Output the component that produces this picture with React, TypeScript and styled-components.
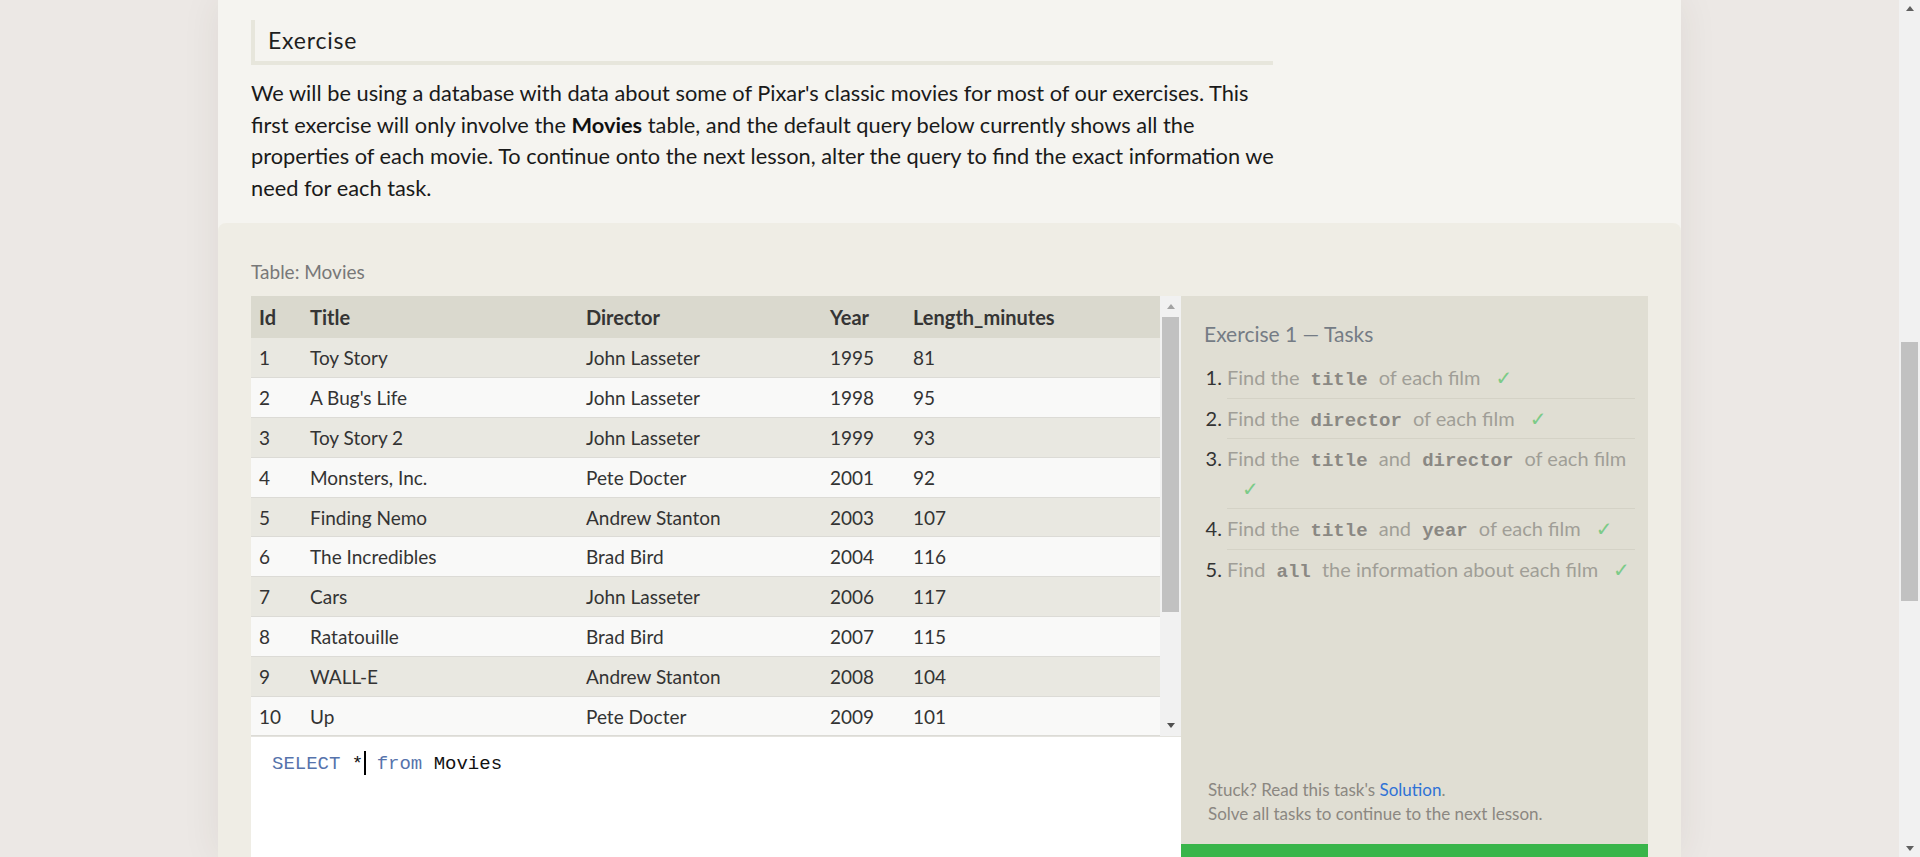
import React from "react";
import styled, { createGlobalStyle } from "styled-components";

const GlobalStyle = createGlobalStyle`
  html, body {
    margin: 0;
    padding: 0;
    height: 857px;
    overflow: hidden;
    background: #ece8e5;
  }
  body {
    font-family: Lato, "Open Sans", sans-serif;
    color: #222;
  }
  * { box-sizing: border-box; }
`;

const Page = styled.div`
  display: flex;
  height: 857px;
  overflow: hidden;
`;

const Main = styled.div`
  flex: 1;
  display: flex;
  justify-content: center;
  overflow: hidden;
`;

const Panel = styled.div`
  width: 1463px;
  flex-shrink: 0;
  background: #f5f4f0;
  box-shadow: 0 0 36px rgba(70, 50, 40, 0.08);
  display: flex;
  flex-direction: column;
`;

const Intro = styled.section`
  padding: 20px 408px 20px 33px;
`;

const Heading = styled.h2`
  margin: 0;
  font-size: 23px;
  font-weight: 400;
  letter-spacing: 0.8px;
  line-height: 41px;
  padding-left: 13px;
  border-left: 4px solid #e7e6dc;
  border-bottom: 4px solid #e7e6dc;
  color: #1e1e1e;
`;

const Paragraph = styled.p`
  margin: 12px -8px 0 0;
  font-size: 21.8px;
  line-height: 31.5px;
  color: #1a1a1a;
`;

const Strong = styled.b`
  font-weight: 700;
  color: #111;
`;

const Workspace = styled.section`
  flex: 1;
  background: #efede5;
  border-radius: 8px 8px 0 0;
  padding: 0 33px;
`;

const TableLabel = styled.div`
  font-size: 19px;
  color: #787878;
  line-height: 26px;
  padding: 36px 0 11px;
`;

const WorkRow = styled.div`
  display: flex;
  align-items: flex-start;
`;

const LeftCol = styled.div`
  width: 930px;
  display: flex;
  flex-direction: column;
`;

const TableArea = styled.div`
  display: flex;
`;

const Table = styled.table`
  flex: 1;
  border-collapse: collapse;
  table-layout: fixed;
  font-size: 19px;
  color: #333;
`;

const HeadCell = styled.th<{ $w?: number }>`
  width: ${(p) => (p.$w ? `${p.$w}px` : "auto")};
  height: 42px;
  padding: 0 8px;
  text-align: left;
  font-size: 20px;
  font-weight: 700;
  background: #dad9ce;
  color: #353535;
`;

const Row = styled.tr<{ $odd: boolean }>`
  background: ${(p) => (p.$odd ? "#e9e8e1" : "#f9f9f8")};
  border-bottom: 1px solid #dcdbd6;
`;

const Cell = styled.td`
  height: 39.8px;
  padding: 0 8px;
  white-space: nowrap;
`;

const ScrollTrack = styled.div<{ $w: number }>`
  width: ${(p) => p.$w}px;
  flex-shrink: 0;
  background: #f1f1f1;
  display: flex;
  flex-direction: column;
`;

const ArrowBox = styled.div<{ $h: number }>`
  height: ${(p) => p.$h}px;
  display: flex;
  align-items: center;
  justify-content: center;
  flex-shrink: 0;
`;

const Arrow = styled.div<{ $up: boolean; $color: string }>`
  width: 0;
  height: 0;
  border-left: 4.5px solid transparent;
  border-right: 4.5px solid transparent;
  ${(p) =>
    p.$up
      ? `border-bottom: 5px solid ${p.$color};`
      : `border-top: 5px solid ${p.$color};`}
`;

const Thumb = styled.div<{ $h: number; $top: number }>`
  height: ${(p) => p.$h}px;
  margin: ${(p) => p.$top}px 2px 0;
  background: #c1c1c1;
  flex-shrink: 0;
`;

const Spacer = styled.div`
  flex: 1;
`;

const Editor = styled.div`
  height: 160px;
  background: #fff;
  border-top: 1px solid #e4e3de;
  padding: 14px 21px;
  font-family: "Liberation Mono", "DejaVu Sans Mono", monospace;
  font-size: 19px;
  line-height: 26px;
  color: #111;
  white-space: pre;
`;

const Keyword = styled.span`
  color: #5673ac;
`;

const Caret = styled.span`
  display: inline-block;
  width: 2px;
  height: 24px;
  background: #000;
  vertical-align: -6px;
  margin: 0 -1px 0 1px;
`;

const RightCol = styled.div`
  width: 467px;
  display: flex;
  flex-direction: column;
`;

const TaskPanel = styled.div`
  height: 548px;
  background: #e0ded3;
  display: flex;
  flex-direction: column;
  padding: 24px 13px 18px 23px;
`;

const TaskTitle = styled.div`
  font-size: 21px;
  line-height: 28px;
  color: #757c85;
`;

const TaskList = styled.ol`
  margin: 10px 0 0;
  padding-left: 23px;
  font-size: 20px;
  color: #a09e97;
`;

const TaskItem = styled.li`
  padding: 5px 0;
  line-height: 29.5px;
  border-bottom: 1px solid #d4d2c6;
  &:last-child { border-bottom: none; }
  &::marker { color: #333; }
`;

const Code = styled.code`
  font-family: "Liberation Mono", "DejaVu Sans Mono", monospace;
  font-weight: 700;
  font-size: 19px;
  line-height: 1;
  color: #8a8883;
  padding: 0 6px;
`;

const Check = styled.span`
  display: inline-block;
  margin-left: 15px;
  color: #7ccb88;
  font-family: "DejaVu Sans", sans-serif;
  font-size: 20px;
  line-height: 1;
`;

const Footer = styled.div`
  margin-top: auto;
  padding-left: 4px;
  font-size: 17px;
  line-height: 24px;
  color: #8b8781;
`;

const Link = styled.a`
  color: #2f72d6;
  text-decoration: none;
`;

const GreenBar = styled.div`
  height: 52px;
  background: #39b54a;
`;

const PageScroll = styled.div`
  width: 21px;
  height: 857px;
  background: #f1f1f1;
  display: flex;
  flex-direction: column;
`;

const movies = [
  [1, "Toy Story", "John Lasseter", 1995, 81],
  [2, "A Bug's Life", "John Lasseter", 1998, 95],
  [3, "Toy Story 2", "John Lasseter", 1999, 93],
  [4, "Monsters, Inc.", "Pete Docter", 2001, 92],
  [5, "Finding Nemo", "Andrew Stanton", 2003, 107],
  [6, "The Incredibles", "Brad Bird", 2004, 116],
  [7, "Cars", "John Lasseter", 2006, 117],
  [8, "Ratatouille", "Brad Bird", 2007, 115],
  [9, "WALL-E", "Andrew Stanton", 2008, 104],
  [10, "Up", "Pete Docter", 2009, 101],
];

export default function App() {
  return (
    <>
      <GlobalStyle />
      <Page>
        <Main>
          <Panel>
            <Intro>
              <Heading>Exercise</Heading>
              <Paragraph>
                We will be using a database with data about some of Pixar's classic movies for most of our
                exercises. This first exercise will only involve the <Strong>Movies</Strong> table, and the
                default query below currently shows all the properties of each movie. To continue onto the next
                lesson, alter the query to find the exact information we need for each task.
              </Paragraph>
            </Intro>
            <Workspace>
              <TableLabel>Table: Movies</TableLabel>
              <WorkRow>
                <LeftCol>
                  <TableArea>
                    <Table>
                      <thead>
                        <tr>
                          <HeadCell $w={51}>Id</HeadCell>
                          <HeadCell $w={276}>Title</HeadCell>
                          <HeadCell $w={244}>Director</HeadCell>
                          <HeadCell $w={83}>Year</HeadCell>
                          <HeadCell>Length_minutes</HeadCell>
                        </tr>
                      </thead>
                      <tbody>
                        {movies.map((m, i) => (
                          <Row key={m[0]} $odd={i % 2 === 0}>
                            {m.map((v, j) => (
                              <Cell key={j}>{v}</Cell>
                            ))}
                          </Row>
                        ))}
                      </tbody>
                    </Table>
                    <ScrollTrack $w={21}>
                      <ArrowBox $h={21}>
                        <Arrow $up $color="#a3a3a3" />
                      </ArrowBox>
                      <Thumb $h={295} $top={0} />
                      <Spacer />
                      <ArrowBox $h={21}>
                        <Arrow $up={false} $color="#505050" />
                      </ArrowBox>
                    </ScrollTrack>
                  </TableArea>
                  <Editor>
                    <Keyword>SELECT</Keyword> *<Caret /> <Keyword>from</Keyword> Movies
                  </Editor>
                </LeftCol>
                <RightCol>
                  <TaskPanel>
                    <TaskTitle>Exercise 1 — Tasks</TaskTitle>
                    <TaskList>
                      <TaskItem>
                        Find the <Code>title</Code> of each film<Check>✓</Check>
                      </TaskItem>
                      <TaskItem>
                        Find the <Code>director</Code> of each film<Check>✓</Check>
                      </TaskItem>
                      <TaskItem>
                        Find the <Code>title</Code> and <Code>director</Code> of each film<Check>✓</Check>
                      </TaskItem>
                      <TaskItem>
                        Find the <Code>title</Code> and <Code>year</Code> of each film<Check>✓</Check>
                      </TaskItem>
                      <TaskItem>
                        Find <Code>all</Code> the information about each film<Check>✓</Check>
                      </TaskItem>
                    </TaskList>
                    <Footer>
                      Stuck? Read this task's <Link href="#">Solution</Link>.
                      <br />
                      Solve all tasks to continue to the next lesson.
                    </Footer>
                  </TaskPanel>
                  <GreenBar />
                </RightCol>
              </WorkRow>
            </Workspace>
          </Panel>
        </Main>
        <PageScroll>
          <ArrowBox $h={17}>
            <Arrow $up $color="#606060" />
          </ArrowBox>
          <Thumb $h={259} $top={325} />
          <Spacer />
          <ArrowBox $h={17}>
            <Arrow $up={false} $color="#606060" />
          </ArrowBox>
        </PageScroll>
      </Page>
    </>
  );
}
